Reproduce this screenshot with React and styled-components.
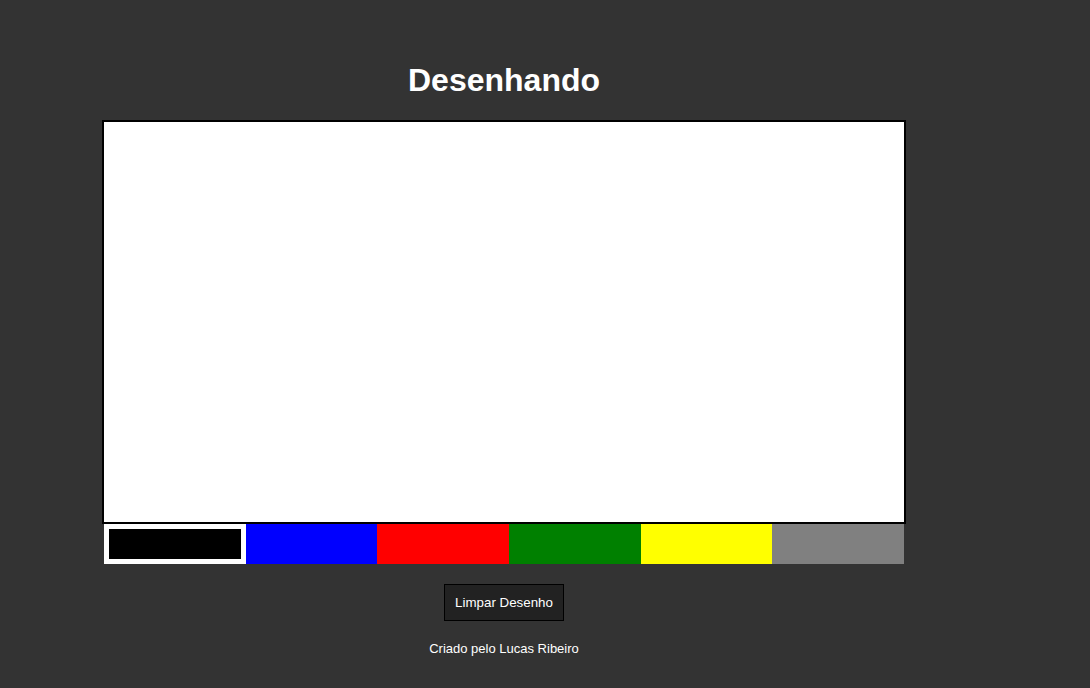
import { useState } from 'react'
import styled, { createGlobalStyle } from 'styled-components'

const colors = ['black', 'blue', 'red', 'green', 'yellow', 'gray']

export default function App() {
    const [current, setCurrent] = useState('black')

    return (
        <>
            <GlobalStyle />
            <Page>
                <Title>Desenhando</Title>
                <Board />
                <Palette>
                    {colors.map((c) => (
                        <Swatch
                            key={c}
                            $color={c}
                            $active={c === current}
                            onClick={() => setCurrent(c)}
                        />
                    ))}
                </Palette>
                <ClearButton>Limpar Desenho</ClearButton>
                <Credits>Criado pelo Lucas Ribeiro</Credits>
            </Page>
        </>
    )
}

const GlobalStyle = createGlobalStyle`
html, body{
    margin: 0;
    padding: 0;
    background-color: #333;
    min-height: 100%;
}

body{
    font-family: "Liberation Sans", Arial, sans-serif;
    color: #fff;
}
`

const Page = styled.main`
width: 1008px;
min-height: 688px;
padding-top: 62px;
box-sizing: border-box;
display: flex;
flex-direction: column;
align-items: center;
`

const Title = styled.h1`
margin: 0 0 21px;
font-size: 32px;
line-height: 37px;
font-weight: bold;
color: #fff;
`

const Board = styled.div`
width: 800px;
height: 400px;
background-color: #fff;
border: 2px solid #000;
`

const Palette = styled.div`
display: flex;
width: 800px;
height: 40px;
`

const Swatch = styled.div`
flex: 1 1 0;
background-color: ${(p) => p.$color};
border: ${(p) => (p.$active ? '5px solid #fff' : 'none')};
cursor: pointer;
`

const ClearButton = styled.button`
margin-top: 20px;
padding: 10px;
background-color: #222;
color: #fff;
border: 1px solid #000;
font-family: "Liberation Sans", Arial, sans-serif;
font-size: 13.333px;
line-height: 15px;
cursor: pointer;
`

const Credits = styled.p`
margin: 20px 0 0;
font-size: 13px;
line-height: 15px;
color: #fff;
`
